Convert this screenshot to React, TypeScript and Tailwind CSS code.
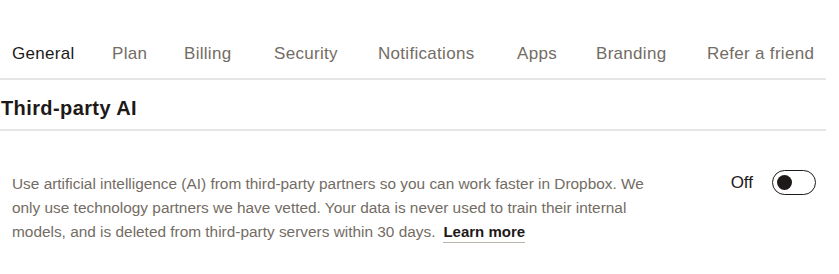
import React from 'react';

const tabs: { label: string; w: string }[] = [
  { label: 'General', w: 'w-[100px]' },
  { label: 'Plan', w: 'w-[72px]' },
  { label: 'Billing', w: 'w-[90px]' },
  { label: 'Security', w: 'w-[104px]' },
  { label: 'Notifications', w: 'w-[139px]' },
  { label: 'Apps', w: 'w-[79px]' },
  { label: 'Branding', w: 'w-[111px]' },
  { label: 'Refer a friend', w: 'w-[119px]' },
];

export default function App() {
  return (
    <div className="h-[274px] w-[839px] bg-white font-['Liberation_Sans',sans-serif]">
      <div className="w-[826px] pt-[42px]">
        <nav className="flex border-b-2 border-[#e8e6e4] pb-[12px] pl-[12px]">
          {tabs.map((t, i) => (
            <span
              key={t.label}
              className={`${t.w} shrink-0 whitespace-nowrap text-[17px] leading-[24px] tracking-[0.3px] ${
                i === 0 ? 'text-[#1e1919]' : 'text-[#736c64]'
              }`}
            >
              {t.label}
            </span>
          ))}
        </nav>

        <h2 className="border-b-2 border-[#e8e6e4] pb-[9px] pt-[16px] pl-[1px] text-[20px] font-bold leading-[24px] tracking-[0.4px] text-[#1e1919]">
          Third-party AI
        </h2>

        <div className="flex items-start justify-between pl-[12px] pr-[10px] pt-[41px]">
          <p className="w-[650px] text-[15.4px] leading-[24px] text-[#736c64]">
            Use artificial intelligence (AI) from third-party partners so you can work faster in Dropbox. We only
            use technology partners we have vetted. Your data is never used to train their internal models, and is
            deleted from third-party servers within 30 days.
            <a className="ml-[8px] border-b border-[#bbb5ae] pb-[2px] text-[15px] font-bold text-[#1e1919]">
              Learn more
            </a>
          </p>
          <div className="-mt-[2px] flex items-center gap-[19px]">
            <span className="text-[17px] leading-[24px] text-[#1e1919]">Off</span>
            <span className="flex h-[25px] w-[44px] items-center rounded-full border-[1.5px] border-[#1e1919] px-[4px]">
              <span className="h-[15px] w-[15px] rounded-full bg-[#1e1919]" />
            </span>
          </div>
        </div>
      </div>
    </div>
  );
}
